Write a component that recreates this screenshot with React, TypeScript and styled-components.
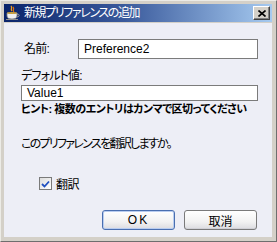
import React from 'react';
import styled, { createGlobalStyle } from 'styled-components';

const GlobalStyle = createGlobalStyle`
  html, body {
    margin: 0;
    padding: 0;
    background: #d4d0c8;
  }
  body {
    font-family: "Liberation Sans", "Noto Sans CJK JP", sans-serif;
    font-size: 12px;
    font-feature-settings: "palt";
  }
`;

const Window = styled.div`
  box-sizing: border-box;
  width: 277px;
  height: 242px;
  display: flex;
  flex-direction: column;
  padding: 3px 4px 4px 3px;
  background: #d4d0c8;
  border-top: 1px solid #ecebe6;
  border-left: 1px solid #ecebe6;
  border-right: 1px solid #6e6e6e;
  border-bottom: 1px solid #6e6e6e;
`;

const TitleBar = styled.div`
  height: 18px;
  display: flex;
  align-items: center;
  padding: 0 2px 0 1px;
  background: linear-gradient(to right, #0a246a 0%, #3a5a9c 45%, #a6caf0 100%);
  color: #ffffff;
`;

const TitleIcon = styled.svg`
  width: 16px;
  height: 16px;
  flex: none;
`;

const TitleText = styled.span`
  margin-left: 3px;
  font-size: 12px;
  line-height: 18px;
  letter-spacing: -1.4px;
  flex: 1;
  white-space: nowrap;
`;

const CloseButton = styled.div`
  box-sizing: border-box;
  width: 17px;
  height: 14px;
  display: flex;
  align-items: center;
  justify-content: center;
  background: #d4d0c8;
  border-top: 1px solid #ffffff;
  border-left: 1px solid #ffffff;
  border-right: 1px solid #404040;
  border-bottom: 1px solid #404040;
  box-shadow: inset -1px -1px 0 #808080;
`;

const Body = styled.div`
  flex: 1;
  margin-top: 1px;
  display: flex;
  flex-direction: column;
  padding: 16px 14px 0 17px;
  background: #edeef6;
  color: #000000;
`;

const NameRow = styled.div`
  display: flex;
  align-items: center;
`;

const Label = styled.span<{ $width?: number }>`
  width: ${({ $width }) => ($width ? `${$width}px` : 'auto')};
  padding-left: ${({ $width }) => ($width ? '3px' : '0')};
  box-sizing: border-box;
  font-size: 12px;
  line-height: 14px;
  letter-spacing: -0.8px;
  white-space: nowrap;
`;

const TextInput = styled.div`
  box-sizing: border-box;
  flex: 1;
  height: 20px;
  padding: 0 5px;
  display: flex;
  align-items: center;
  background: #ffffff;
  border: 1px solid #7b7b7b;
  font-size: 12px;
`;

const Field = styled.div`
  display: flex;
  flex-direction: column;
  margin-top: 10px;
  gap: 2px;
`;

const Hint = styled.div`
  margin-top: 1px;
  font-size: 11px;
  line-height: 14px;
  font-weight: bold;
  white-space: nowrap;
  letter-spacing: -0.5px;
`;

const Question = styled.div`
  margin-top: 21px;
  font-size: 12px;
  line-height: 14px;
  letter-spacing: -1.7px;
  white-space: nowrap;
`;

const CheckRow = styled.label`
  display: flex;
  align-items: center;
  margin-top: 24px;
  padding-left: 18px;
  gap: 4px;
  letter-spacing: -0.5px;
`;

const CheckBox = styled.span`
  box-sizing: border-box;
  width: 13px;
  height: 13px;
  display: flex;
  align-items: center;
  justify-content: center;
  background: linear-gradient(135deg, #dcdcdc, #ffffff);
  border: 1px solid #7a7a7a;
`;

const ButtonRow = styled.div`
  display: flex;
  justify-content: flex-end;
  gap: 9px;
  margin-top: 18px;
  padding-right: 1px;
`;

const Button = styled.button<{ $default?: boolean }>`
  box-sizing: border-box;
  width: 73px;
  height: 20px;
  padding: 0;
  font-family: inherit;
  font-size: 12px;
  font-feature-settings: "palt";
  letter-spacing: ${({ $default }) => ($default ? '2px' : '0')};
  color: #000000;
  border-radius: 3px;
  border: 1px solid ${({ $default }) => ($default ? '#4a6fb0' : '#7a7a7a')};
  background: linear-gradient(to bottom, #ffffff 0%, #f2f2f2 60%, #dcdce0 100%);
  box-shadow: ${({ $default }) =>
    $default ? 'inset 0 0 0 1px #b9cdf0' : 'inset 0 -1px 0 #d0d0d6'};
`;

export default function App() {
  return (
    <>
      <GlobalStyle />
      <Window>
        <TitleBar>
          <TitleIcon viewBox="0 0 16 16">
            <path d="M6 1 C8 3 5 4 7 6" stroke="#f0a020" strokeWidth="1.3" fill="none" />
            <path d="M8 2 C10 4 7 5 9 7" stroke="#e07010" strokeWidth="1.2" fill="none" />
            <path d="M2 8 H12 V11 C12 13 10 14 7 14 C4 14 2 13 2 11 Z" fill="#f0f0f0" stroke="#808080" strokeWidth="0.8" />
            <path d="M12 9 C15 9 15 12 11.5 12" stroke="#a0a0a0" strokeWidth="1" fill="none" />
            <ellipse cx="7" cy="8" rx="5" ry="1" fill="#c8a040" />
            <path d="M1 14.5 H13" stroke="#909090" strokeWidth="1" />
          </TitleIcon>
          <TitleText>新規プリファレンスの追加</TitleText>
          <CloseButton>
            <svg width="8" height="7" viewBox="0 0 8 7">
              <path d="M0.5 0.5 L7.5 6.5 M7.5 0.5 L0.5 6.5" stroke="#000" strokeWidth="1.6" />
            </svg>
          </CloseButton>
        </TitleBar>
        <Body>
          <NameRow>
            <Label $width={57}>名前:</Label>
            <TextInput>Preference2</TextInput>
          </NameRow>
          <Field>
            <Label>デフォルト値:</Label>
            <TextInput>Value1</TextInput>
          </Field>
          <Hint>ヒント: 複数のエントリはカンマで区切ってください</Hint>
          <Question>このプリファレンスを翻訳しますか。</Question>
          <CheckRow>
            <CheckBox>
              <svg width="9" height="8" viewBox="0 0 9 8">
                <path d="M1 4 L3.5 6.5 L8 1.5" stroke="#2050c0" strokeWidth="1.8" fill="none" />
              </svg>
            </CheckBox>
            <span>翻訳</span>
          </CheckRow>
          <ButtonRow>
            <Button $default>OK</Button>
            <Button>取消</Button>
          </ButtonRow>
        </Body>
      </Window>
    </>
  );
}
